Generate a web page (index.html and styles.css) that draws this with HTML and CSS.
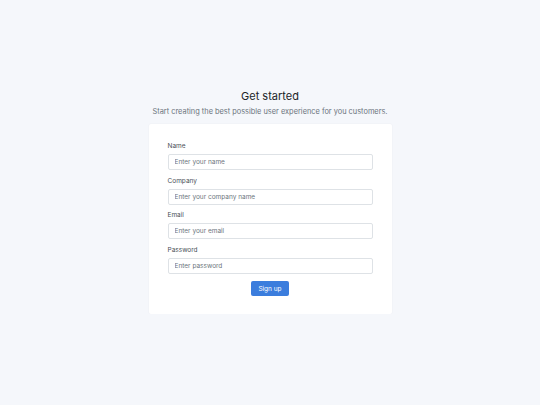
FILE: index.html
```html
<!DOCTYPE html>
<html lang="en">
<head>
  <meta charset="UTF-8" />
  <title>Sign up</title>
  <link rel="stylesheet" href="styles.css">
</head>
<body>

<main class="wrapper">
  <div class="intro">
    <h1>Get started</h1>
    <p>Start creating the best possible user experience for you customers.</p>
  </div>

  <div class="card">
    <form class="signup-form">
      <div class="field">
        <label>Name</label>
        <input type="text" placeholder="Enter your name" />
      </div>
      <div class="field">
        <label>Company</label>
        <input type="text" placeholder="Enter your company name" />
      </div>
      <div class="field">
        <label>Email</label>
        <input type="email" placeholder="Enter your email" />
      </div>
      <div class="field">
        <label>Password</label>
        <input type="password" placeholder="Enter password" />
      </div>
      <div class="actions">
        <button type="submit">Sign up</button>
      </div>
    </form>
  </div>
</main>

</body>
</html>
```

FILE: styles.css
```css
* { box-sizing: border-box; }

body {
  margin: 0;
  font-family: Inter, "Noto Sans", sans-serif;
  background-color: #f5f7fb;
  color: #495057;
}

.wrapper {
  width: 243px;
  margin: 0 auto;
  padding-top: 89px;
}

.intro {
  text-align: center;
  margin-bottom: 6px;
}

.intro h1 {
  margin: 0;
  font-size: 11px;
  font-weight: 400;
  color: #212529;
  line-height: 15px;
}

.intro p {
  margin: 2px -20px 0;
  font-size: 7.4px;
  color: #6c757d;
  line-height: 12px;
}

.card {
  background: white;
  padding: 18px 19px 18px;
  border-radius: 2px;
  box-shadow: 0 0 2px rgba(33, 40, 50, 0.06);
}

.field {
  margin-bottom: 6.5px;
}

.field label {
  display: block;
  font-size: 6.5px;
  line-height: 9px;
  margin-bottom: 3px;
  color: #495057;
}

.field input {
  display: block;
  width: 100%;
  height: 16px;
  padding: 0 6px;
  font-family: inherit;
  font-size: 6.5px;
  border: 1px solid #dee2e6;
  border-radius: 2px;
  color: #495057;
}

.field input::placeholder { color: #6c757d; }

.actions {
  display: flex;
  justify-content: center;
  padding-top: 1px;
}

button {
  background: #3b7ddd;
  color: white;
  font-family: inherit;
  font-size: 6.5px;
  border: none;
  border-radius: 2px;
  height: 15px;
  width: 38px;
  padding: 0;
  cursor: pointer;
}
```
